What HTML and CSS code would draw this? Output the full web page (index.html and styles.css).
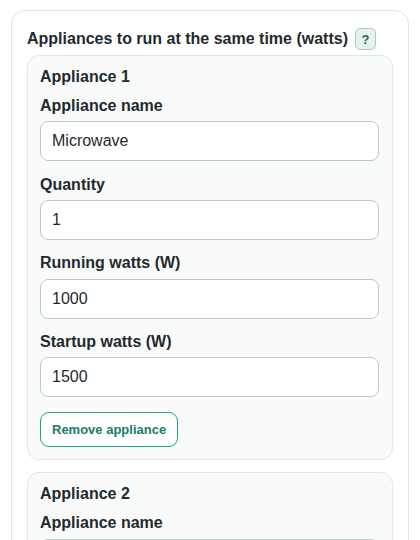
FILE: index.html
```html
<!DOCTYPE html>
<html lang="en">
<head>
<meta charset="utf-8">
<title>Appliances</title>
<link rel="stylesheet" href="styles.css">
</head>
<body>
<div class="page">
  <section class="panel">
    <div class="panel-head">
      <h2 class="panel-title">Appliances to run at the same time (watts)</h2>
      <span class="help">?</span>
    </div>
    <div class="appliance">
      <h3 class="appliance-title">Appliance 1</h3>
      <div class="field">
        <label class="label">Appliance name</label>
        <input class="input" type="text" value="Microwave">
      </div>
      <div class="field">
        <label class="label">Quantity</label>
        <input class="input" type="text" value="1">
      </div>
      <div class="field">
        <label class="label">Running watts (W)</label>
        <input class="input" type="text" value="1000">
      </div>
      <div class="field">
        <label class="label">Startup watts (W)</label>
        <input class="input" type="text" value="1500">
      </div>
      <button class="remove" type="button">Remove appliance</button>
    </div>
    <div class="appliance">
      <h3 class="appliance-title">Appliance 2</h3>
      <div class="field">
        <label class="label">Appliance name</label>
        <input class="input" type="text" value="">
      </div>
    </div>
  </section>
</div>
</body>
</html>
```
FILE: styles.css
```css
html, body {
  margin: 0;
  padding: 0;
  background: #ffffff;
}
body {
  font-family: "Liberation Sans", Arial, sans-serif;
  color: #1f2a2e;
}
.page {
  padding: 10px 11px;
}
.panel {
  border: 1px solid #dde5e3;
  border-radius: 14px;
  background: #ffffff;
  padding: 17px 15px 15px;
}
.panel-head {
  display: flex;
  align-items: center;
  gap: 7px;
  margin-bottom: 5px;
}
.panel-title {
  margin: 0;
  font-size: 16px;
  font-weight: 700;
  line-height: 22px;
}
.help {
  display: inline-flex;
  align-items: center;
  justify-content: center;
  width: 19px;
  height: 20px;
  border: 1px solid #a9c9c2;
  border-radius: 5px;
  background: #e7f2ef;
  color: #1d6d63;
  font-size: 13px;
  font-weight: 700;
}
.appliance {
  border: 1px solid #e0e7e5;
  border-radius: 12px;
  background: #f9fbfa;
  padding: 11px 13px 12px 12px;
  margin-bottom: 12px;
}
.appliance-title {
  margin: 0 0 10px;
  font-size: 16px;
  font-weight: 700;
  line-height: 19px;
}
.field {
  display: flex;
  flex-direction: column;
  margin-bottom: 13.5px;
}
.label {
  font-size: 16px;
  font-weight: 700;
  line-height: 19.2px;
  margin-bottom: 6px;
}
.input {
  box-sizing: border-box;
  height: 40px;
  width: 100%;
  border: 1px solid #bccbc7;
  border-radius: 8px;
  background: #ffffff;
  padding: 0 11px;
  font-family: "Liberation Sans", Arial, sans-serif;
  font-size: 16px;
  color: #1f2a2e;
}
.field:last-of-type {
  margin-bottom: 15px;
}
.remove {
  display: inline-block;
  box-sizing: border-box;
  height: 35px;
  padding: 0 11px;
  border: 1px solid #1fa088;
  border-radius: 9px;
  background: #ffffff;
  color: #1c7a69;
  font-family: "Liberation Sans", Arial, sans-serif;
  font-size: 13px;
  font-weight: 700;
}
```
